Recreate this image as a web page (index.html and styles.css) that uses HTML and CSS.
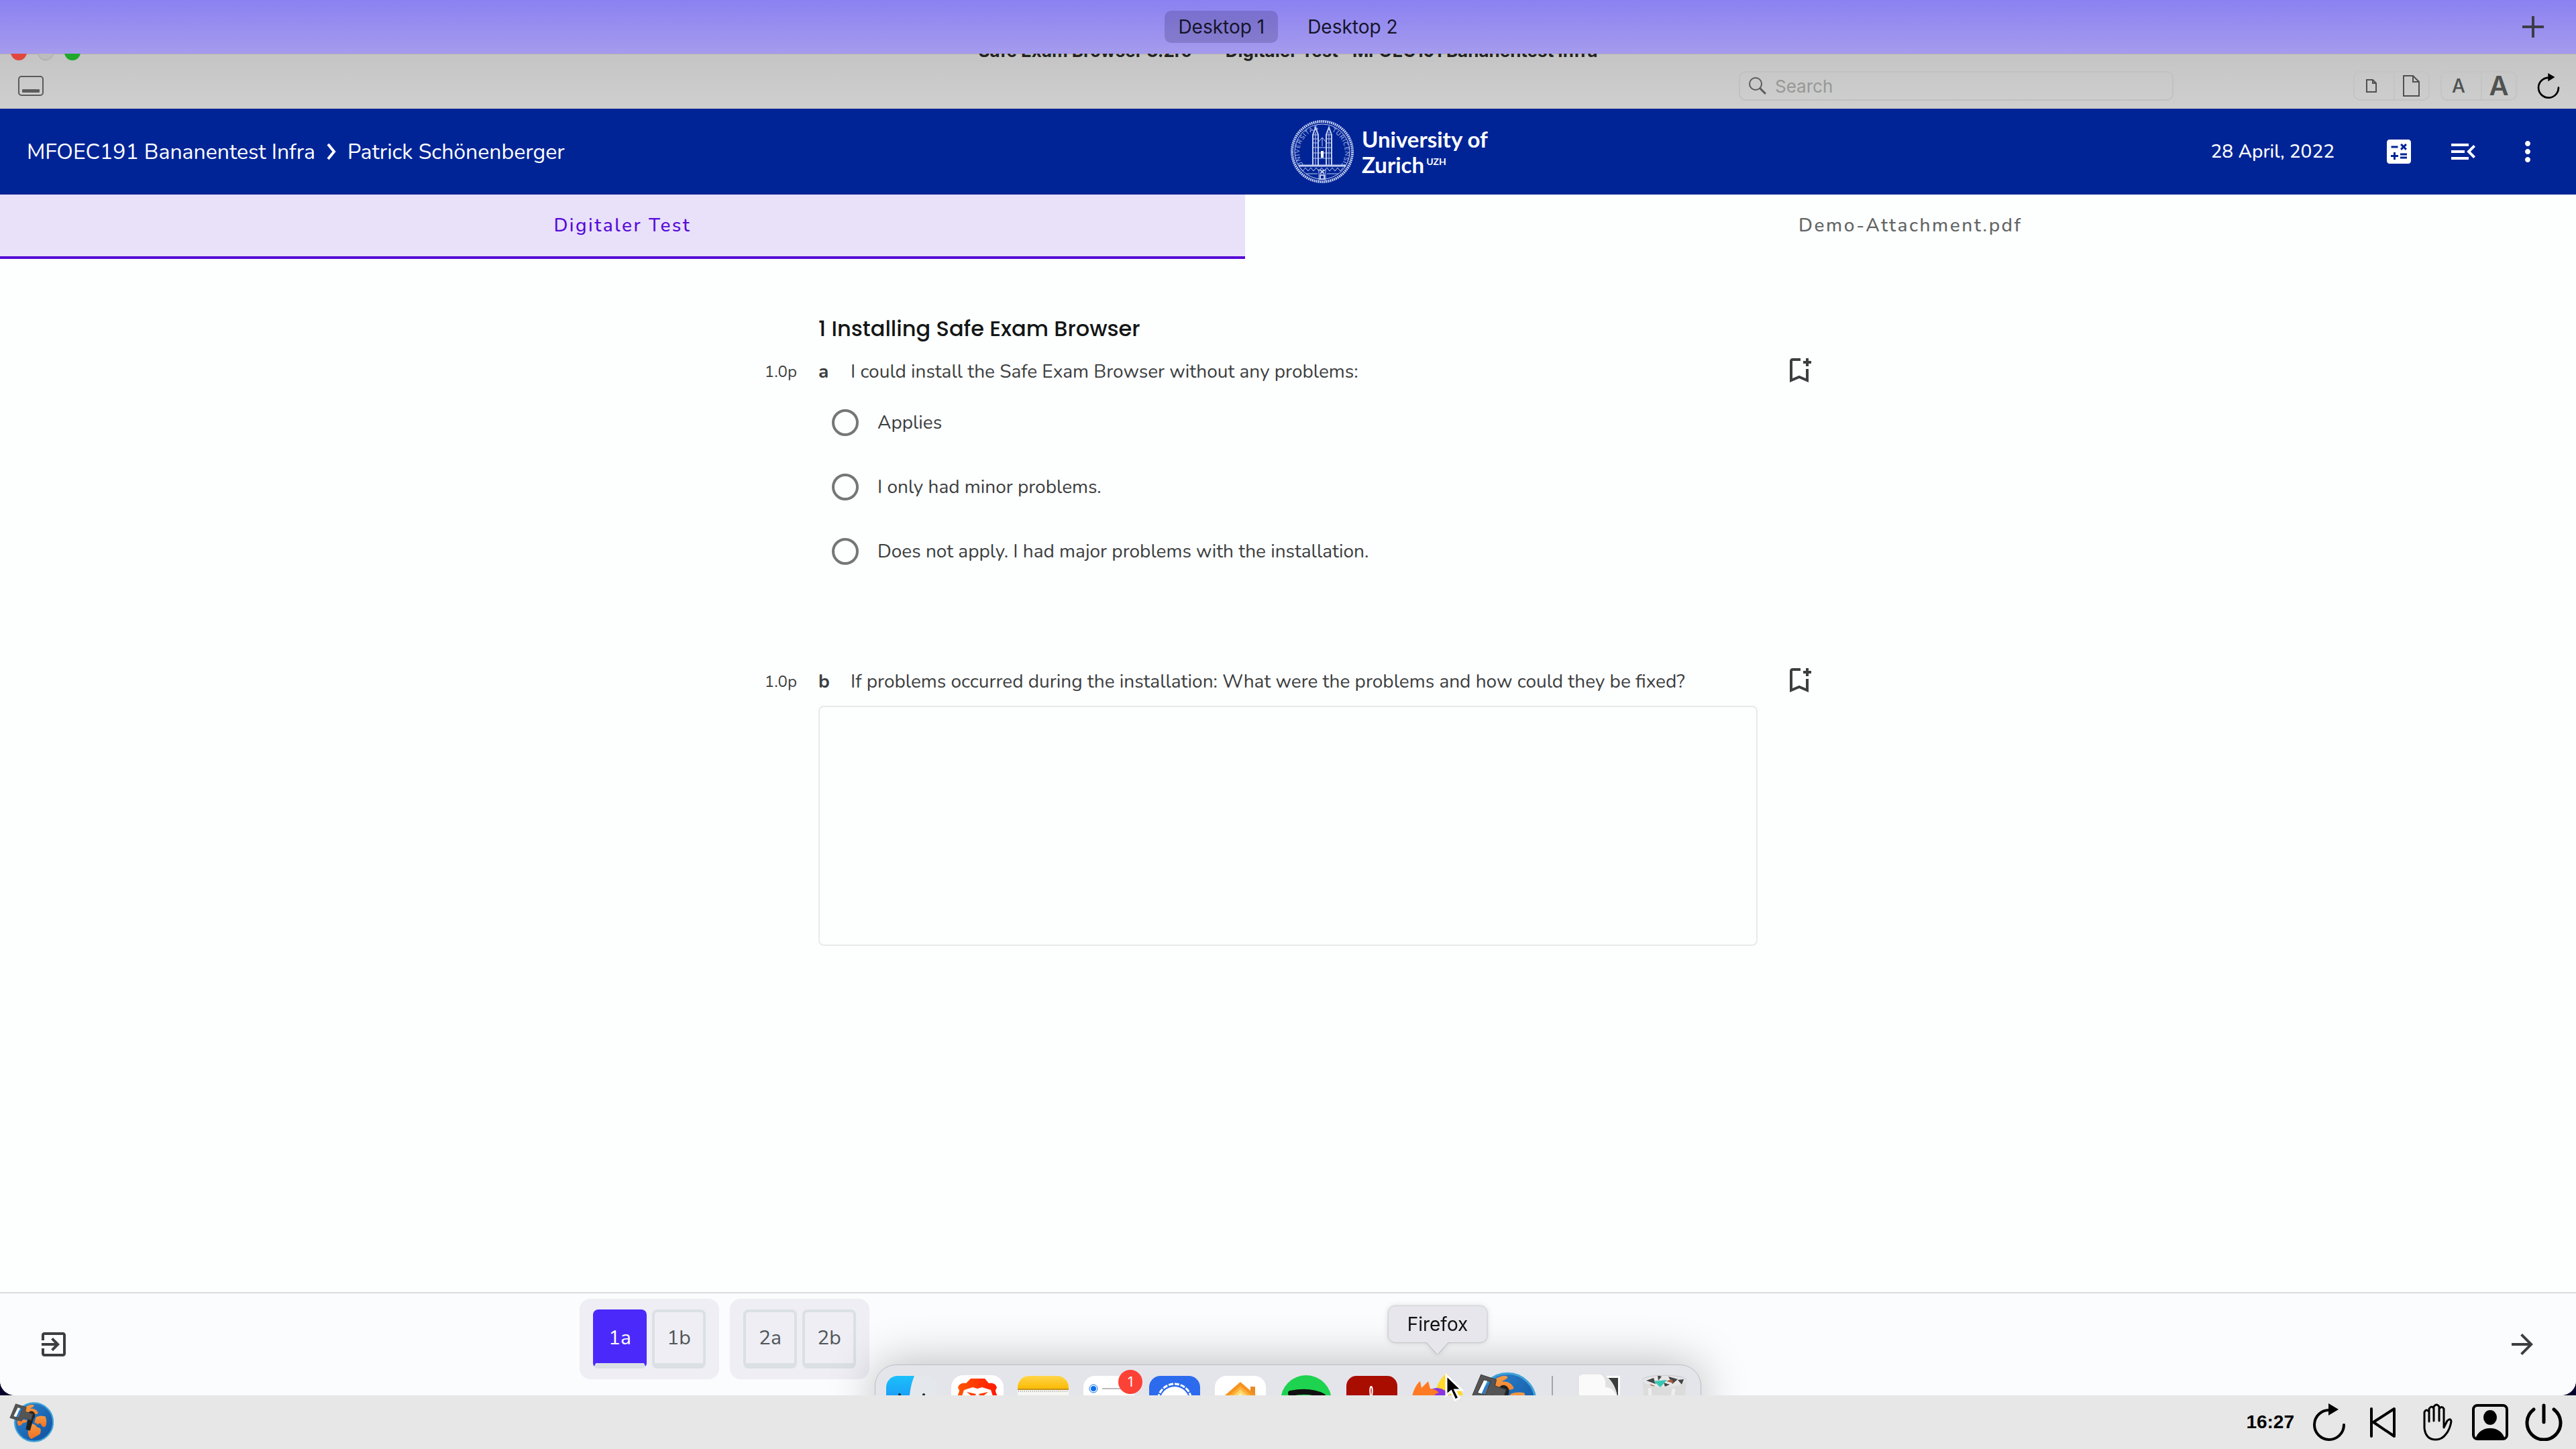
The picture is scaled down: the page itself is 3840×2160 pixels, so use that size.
FILE: index.html
```html
<!DOCTYPE html>
<html lang="en">

<head>
    <meta charset="UTF-8">
    <meta name="viewport" content="width=device-width, initial-scale=1.0">
    <title>Digitaler Test · MFOEC191 Bananentest Infra</title>
    <link rel="stylesheet" href="styles.css">
</head>

<body>
    <!-- Shared icon shapes -->
    <svg class="defs" aria-hidden="true">
        <symbol id="bookmark" viewBox="0 0 24 24">
            <path d="M17 11v6.97l-5-2.14-5 2.14V5h6V3H7c-1.1 0-2 .9-2 2v16l7-3 7 3V11h-2zm4-4h-2v2h-2V7h-2V5h2V3h2v2h2v2z" />
        </symbol>
        <symbol id="reload" viewBox="-2 0 56 56">
            <path d="M27 10A22 22 0 1 0 48 32" fill="none" stroke="#000" stroke-width="4" stroke-linecap="round" />
            <path d="M25 0l15 9-15 9z" />
        </symbol>
        <symbol id="globe" viewBox="0 0 92 84">
            <linearGradient id="sea" x1="0" y1="0" x2="1" y2="1">
                <stop offset="0" stop-color="#2f86cf" />
                <stop offset="1" stop-color="#0d4f9e" />
            </linearGradient>
            <linearGradient id="land" x1="0" y1="0" x2="0" y2="1">
                <stop offset="0" stop-color="#f39a45" />
                <stop offset="1" stop-color="#f37021" />
            </linearGradient>
            <circle cx="51" cy="42" r="40" fill="url(#sea)" stroke="#41a3d9" stroke-width="3" />
            <path fill="url(#land)" d="M34 10c6-4 14-6 17-3 0 4-6 4-8 7 8-1 14 2 17 9-3 4-8 1-12 3-7-1-13 2-18 6-6 3-8 10-14 14 0-12 6-27 18-36z" />
            <path fill="url(#land)" d="M55 32c6-4 15-3 20-2 3 8 3 15 0 21-5 3-8-1-10-6-3-2-5 1-6 3-1-4-5-5-7-4zM17 42c6-6 13-6 20-4-2 6-6 5-10 6-2 5-5 6-9 5z" />
            <path fill="url(#land)" d="M40 46c8-3 15 1 18 7 7 0 9 5 6 13-5 5-12 6-18 11-6-3-8-10-7-18z" />
            <path fill="#222" d="M47 19a8 9 0 0 1 3 16l-7 25-9-3 5-24a8 9 0 0 1 8-14z" />
            <path fill="#555" fill-rule="evenodd" d="M13 4l22 7-2 9 16 5-4 13-16-5-4 7L1 33zM17 11l-9 19 11 3 8-19z" stroke="#3a3a3a" stroke-width="1" stroke-linejoin="round" />
            <path d="M18 12l-9 17 5 2 8-18z" fill="#fff" />
        </symbol>
    </svg>

    <div class="spaces">
        <div class="spaces-list">
            <button class="space active">Desktop 1</button>
            <button class="space">Desktop 2</button>
        </div>
        <button class="space-add" aria-label="Add desktop">
            <svg width="32" height="32" viewBox="0 0 32 32"><path d="M0 14h32v4H0zM14 0h4v32h-4z" fill="#3c3c46" /></svg>
        </button>
    </div>

    <div class="window">
        <div class="titlebar">
            <div class="lights">
                <span class="light red"></span>
                <span class="light grey"></span>
                <span class="light green"></span>
            </div>
            <div class="window-title">Safe Exam Browser 3.2rc &nbsp;—&nbsp; Digitaler Test · MFOEC191 Bananentest Infra</div>
        </div>

        <div class="toolbar">
            <button class="dock-toggle" aria-label="Toggle bottom bar">
                <svg width="38" height="30" viewBox="0 0 38 30">
                    <rect x="1" y="1" width="36" height="28" rx="4" fill="none" stroke="#5a5b5a" stroke-width="2" />
                    <rect x="6" y="20" width="26" height="5" rx="1" fill="#5a5b5a" />
                </svg>
            </button>
            <div class="toolbar-right">
                <label class="search">
                    <svg width="28" height="28" viewBox="0 0 28 28" fill="none" stroke="#5a5b5a">
                        <circle cx="11" cy="11" r="9" stroke-width="2" />
                        <path d="M18 18l7 7" stroke-width="3" stroke-linecap="round" />
                    </svg>
                    <input type="text" placeholder="Search" aria-label="Search">
                </label>
                <div class="tool-group">
                    <button aria-label="Zoom page out">
                        <svg width="16" height="20" viewBox="0 0 16 20"><path d="M1 1h9l5 5v13H1zM10 1v5h5" fill="none" stroke="#4f504f" stroke-width="2" /></svg>
                    </button>
                    <button aria-label="Zoom page in">
                        <svg width="26" height="32" viewBox="0 0 26 32"><path d="M1 1h14l9 9v21H1zM15 1v9h9" fill="none" stroke="#4f504f" stroke-width="2" /></svg>
                    </button>
                </div>
                <div class="tool-group">
                    <button class="text-small">A</button>
                    <button class="text-large">A</button>
                </div>
                <button class="reload" aria-label="Reload">
                    <svg width="38" height="38"><use href="#reload" /></svg>
                </button>
            </div>
        </div>

        <header class="exam-header">
            <div class="breadcrumb">
                <span>MFOEC191 Bananentest Infra</span>
                <svg width="16" height="28" viewBox="0 0 16 28"><path d="M3 3l9 11-9 11" fill="none" stroke="#fff" stroke-width="4" /></svg>
                <span>Patrick Schönenberger</span>
            </div>
            <div class="header-right">
                <div class="logo">
                    <svg class="seal" viewBox="0 0 94 94" fill="none" stroke="#c3cdf0">
                        <circle cx="47" cy="47" r="45" stroke-width="4" stroke-dasharray="2 1" />
                        <circle cx="47" cy="47" r="41" stroke-width="1" />
                        <path id="ring" d="M19 67A34 34 0 1 1 75 67" stroke="none" />
                        <text class="seal-text"><textPath href="#ring">UNIVERSITAS</textPath></text>
                        <text class="seal-text"><textPath href="#ring" startOffset="88">TURICENSIS</textPath></text>
                        <!-- Twin towers of the minster -->
                        <path d="M33 67V22l4-11 4 11v45M53 67V22l4-11 4 11v45" stroke-width="2" />
                        <path d="M37 18v50M57 18v50M33 22h8M33 28h8M33 34h8M33 41h28M33 49h28M33 57h28M53 22h8M53 28h8M53 34h8M41 33l6-7 6 7M47 26v13" />
                        <path d="M45 46h4v10h-4z" fill="#fff" stroke="none" />
                        <path d="M12 68h70" stroke-width="3" />
                        <path d="M14 71l4 5 4-5 4 5 4-5 4 5 4-5 4 5 4-5 4 5 4-5 4 5 4-5 4 5 4-5 4 5 4-5M23 80h17M54 80h17M42 73v18M52 73v18" />
                        <path d="M44 74l6 6M50 74l-6 6M44 82h6v6h-6z" stroke-width="2" />
                    </svg>
                    <div class="logo-text">University of<br>Zurich<sup>UZH</sup></div>
                </div>
                <div class="header-tools">
                    <span class="date">28 April, 2022</span>
                    <button class="icon-btn" aria-label="Calculator">
                        <svg viewBox="0 0 24 24"><path d="M19 3H5c-1.1 0-2 .9-2 2v14c0 1.1.9 2 2 2h14c1.1 0 2-.9 2-2V5c0-1.1-.9-2-2-2zm-5.97 4.06L14.09 6l1.41 1.41L16.91 6l1.06 1.06-1.41 1.41 1.41 1.41-1.06 1.06-1.41-1.4-1.41 1.41-1.06-1.06 1.41-1.41-1.41-1.42zm-6.78.66h5v1.5h-5v-1.5zM11.5 16h-2v2H8v-2H6v-1.5h2v-2h1.5v2h2V16zm6.5 1.25h-5v-1.5h5v1.5zm0-2.5h-5v-1.5h5v1.5z" /></svg>
                    </button>
                    <button class="icon-btn" aria-label="Open menu">
                        <svg viewBox="0 0 24 24"><path d="M3 18h13v-2H3v2zm0-5h10v-2H3v2zm0-7v2h13V6H3zm18 9.59L17.42 12 21 8.41 19.59 7l-5 5 5 5L21 15.59z" /></svg>
                    </button>
                    <button class="icon-btn" aria-label="More">
                        <svg viewBox="0 0 24 24"><path d="M12 8c1.1 0 2-.9 2-2s-.9-2-2-2-2 .9-2 2 .9 2 2 2zm0 2c-1.1 0-2 .9-2 2s.9 2 2 2 2-.9 2-2-.9-2-2-2zm0 6c-1.1 0-2 .9-2 2s.9 2 2 2 2-.9 2-2-.9-2-2-2z" /></svg>
                    </button>
                </div>
            </div>
        </header>

        <div class="tabs">
            <button class="tab active">Digitaler Test</button>
            <button class="tab">Demo-Attachment.pdf</button>
        </div>

        <main class="exam">
            <h1>1 Installing Safe Exam Browser</h1>

            <section class="question">
                <span class="points">1.0p</span>
                <div class="question-title"><b>a</b><span>I could install the Safe Exam Browser without any problems:</span></div>
                <button class="icon-btn bookmark" aria-label="Bookmark question a"><svg><use href="#bookmark" /></svg></button>
                <div class="answers">
                    <label><input type="radio" name="q1a">Applies</label>
                    <label><input type="radio" name="q1a">I only had minor problems.</label>
                    <label><input type="radio" name="q1a">Does not apply. I had major problems with the installation.</label>
                </div>
            </section>

            <section class="question">
                <span class="points">1.0p</span>
                <label class="question-title" for="q1b"><b>b</b><span>If problems occurred during the installation: What were the problems and how could they be fixed?</span></label>
                <button class="icon-btn bookmark" aria-label="Bookmark question b"><svg><use href="#bookmark" /></svg></button>
                <textarea id="q1b"></textarea>
            </section>
        </main>

        <footer class="exam-footer">
            <button class="icon-btn" aria-label="Exit exam">
                <svg viewBox="0 0 24 24"><path d="M10.09 15.59L11.5 17l5-5-5-5-1.41 1.41L12.67 11H3v2h9.67l-2.58 2.59zM19 3H5c-1.11 0-2 .9-2 2v4h2V5h14v14H5v-4H3v4c0 1.1.89 2 2 2h14c1.1 0 2-.9 2-2V5c0-1.1-.9-2-2-2z" /></svg>
            </button>
            <nav class="question-nav">
                <div class="nav-group">
                    <button class="current">1a</button>
                    <button>1b</button>
                </div>
                <div class="nav-group">
                    <button>2a</button>
                    <button>2b</button>
                </div>
            </nav>
            <button class="icon-btn" aria-label="Next question">
                <svg viewBox="0 0 24 24"><path d="M12 4l-1.41 1.41L16.17 11H4v2h12.17l-5.58 5.59L12 20l8-8z" /></svg>
            </button>
        </footer>
    </div>

    <!-- macOS dock, half hidden behind the taskbar -->
    <div class="dock">
        <svg class="app" viewBox="0 0 76 76">
            <linearGradient id="finder" x1="0" y1="0" x2="0" y2="1">
                <stop offset="0" stop-color="#1cc0fb" />
                <stop offset="1" stop-color="#1a6ff0" />
            </linearGradient>
            <rect width="76" height="76" rx="17" fill="#e4e8ec" />
            <path d="M17 0h25c-5 12-7 24-8 42h10v34H17A17 17 0 0 1 0 59V17A17 17 0 0 1 17 0z" fill="url(#finder)" />
            <path d="M20 28v10M56 28v10" stroke="#1d2a36" stroke-width="4" stroke-linecap="round" />
        </svg>
        <svg class="app" viewBox="0 0 76 76">
            <linearGradient id="lion"><stop offset="0" stop-color="#ff5500" /><stop offset="1" stop-color="#ff1a00" /></linearGradient>
            <rect x="-1" y="-1" width="78" height="78" rx="18" fill="#fff" />
            <path d="M28 4h21l6 7c6-1 11 1 12 7-3 3-2 6 0 10l-4 34H13L9 28c2-4 3-7 0-10 1-6 6-8 12-7z" fill="url(#lion)" />
            <path d="M15 30l3-9 13-4 7 2 7-2 13 4 3 9-5 24H20z" fill="#fff" />
            <path d="M22 24l14 3-3 6zM54 24l-14 3 3 6z" fill="#ff3a00" />
        </svg>
        <svg class="app" viewBox="0 0 76 76">
            <linearGradient id="notes" x1="0" y1="0" x2="0" y2="1">
                <stop offset="0" stop-color="#ffd54a" />
                <stop offset="1" stop-color="#fab900" />
            </linearGradient>
            <rect width="76" height="76" rx="17" fill="#f6f6f2" />
            <path d="M0 20v-3A17 17 0 0 1 17 0h42a17 17 0 0 1 17 17v3z" fill="url(#notes)" />
            <path d="M0 20h76" stroke="#c28f1c" stroke-width="2" />
            <path d="M1 23h74" stroke="#aaa" stroke-width="2" stroke-dasharray="1 2" />
        </svg>
        <div class="app-wrap">
            <svg class="app" viewBox="0 0 76 76">
                <rect width="76" height="76" rx="17" fill="#fff" />
                <circle cx="15" cy="19" r="6" fill="none" stroke="#1670e8" stroke-width="1" />
                <circle cx="15" cy="19" r="4" fill="#0a6ff0" />
                <path d="M28 19h40" stroke="#bbb" stroke-width="2" />
            </svg>
            <span class="badge">1</span>
        </div>
        <svg class="app" viewBox="0 0 76 76">
            <rect width="76" height="76" rx="17" fill="#2c6bed" />
            <circle cx="38" cy="37" r="25" fill="none" stroke="#fff" stroke-width="3" stroke-dasharray="7 2" />
            <circle cx="38" cy="38" r="22" fill="#fff" />
        </svg>
        <svg class="app" viewBox="0 0 76 76">
            <rect width="76" height="76" rx="17" fill="#fff" />
            <path d="M53 16h7v24h-7z" fill="#e98a25" />
            <path d="M38 9l30 26H8z" fill="#f7931e" />
            <path d="M38 15l23 20H15z" fill="#fbb03b" />
            <path d="M38 20l18 16H20z" fill="#fdd468" />
            <path d="M38 25l12 12H26z" fill="#fff0b0" />
        </svg>
        <svg class="app" viewBox="0 0 76 76">
            <circle cx="38" cy="37" r="38" fill="#1ed34f" />
            <path d="M15 26c18-4 34-3 48 4" fill="none" stroke="#111" stroke-width="8" stroke-linecap="round" />
        </svg>
        <svg class="app" viewBox="0 0 76 76">
            <rect width="76" height="76" rx="15" fill="#a90d00" />
            <path d="M37 34c-6-24 6-24 0 0" fill="none" stroke="#fff" stroke-width="2" />
        </svg>
        <div class="app-wrap">
            <svg class="app" viewBox="0 0 76 76">
                <path d="M51-4c4 5 6 10 12 13 7 5 11 13 13 21v16H36V20C38 10 45 2 51-4z" fill="#ffd92b" />
                <circle cx="37" cy="38" r="20" fill="#8a35e0" />
                <path d="M-1 42C-1 26 6 12 12 8l2 10L24 8l3 11c6 0 10 3 13 6-6 2-8 4-12 12z" fill="#ff7a22" />
            </svg>
            <span class="tooltip">Firefox</span>
        </div>
        <svg class="app seb"><use href="#globe" x="-9" y="-6" width="96" height="88" /></svg>
        <span class="dock-separator"></span>
        <svg class="app file" viewBox="0 0 72 76">
            <path d="M38 0h24v70H38z" fill="#fff" />
            <path d="M40 3h19v62H40z" fill="#3a3d3d" />
            <path d="M0 0L6-3h26c14 2 24 20 26 36v42H0z" fill="#fafafa" stroke="#ddd" />
            <path d="M32-3c8 4 9 12 8 20 9 0 15 6 18 16C56 14 46 0 32-3z" fill="#e1e1e1" />
        </svg>
        <svg class="app trash" viewBox="0 0 68 76">
            <path d="M8 4l9-5 7 4 5-8 9 7 9-6 8 8 8 3-2 10H6z" fill="#e6e6e6" />
            <path d="M7 7l11-4 3 9zM40 1l6 11 8-7zM24-1l6 2-5 6zM54 6l9-1-3 8zM33 10l9 3-7 3z" fill="#454545" />
            <path d="M18 8l20-2-10 11z" fill="#38c7b3" />
            <path d="M37 8l8-3 3 6zM12 12l8 3-3 2z" fill="#a85840" />
            <path d="M1 6c6 14 60 15 66 0l-6 66H7z" fill="#dcdcdc" />
            <path d="M1 6C4-3 64-3 67 6" fill="none" stroke="#c6c6c8" />
            <path d="M12 18l4 53M48 19l-8 52" stroke="#eee" stroke-width="5" />
        </svg>
    </div>

    <div class="taskbar">
        <button class="task-app" aria-label="Safe Exam Browser"><svg width="66" height="60"><use href="#globe" /></svg></button>
        <div class="task-tools">
            <span class="clock">16:27</span>
            <button aria-label="Reload"><svg><use href="#reload" /></svg></button>
            <button aria-label="Back to start">
                <svg viewBox="0 0 56 56" fill="none" stroke="#000" stroke-width="4" stroke-linecap="round"><path d="M11 8v41M45 8v41L14 28z" stroke-linejoin="round" /></svg>
            </button>
            <button aria-label="Raise hand">
                <svg viewBox="-3 0 56 56" fill="none" stroke="#000" stroke-width="3" stroke-linejoin="round" stroke-linecap="round">
                    <path d="M7 37V13q3-6 7 0V8q4-6 7 0V5q4-6 8 0v3q4-5 7 0v28l5-10q5-5 6 1-2 12-8 19-6 8-15 8Q9 54 7 37zM14 13v14M21 8v18M29 7v19" />
                </svg>
            </button>
            <button aria-label="User">
                <svg viewBox="0 0 56 56"><rect x="3" y="3" width="50" height="50" rx="6" fill="none" stroke="#000" stroke-width="4" /><ellipse cx="28" cy="21" rx="10" ry="11" /><path d="M6 53c3-10 11-16 22-16s19 6 22 16z" /></svg>
            </button>
            <button aria-label="Quit">
                <svg viewBox="0 0 56 56" fill="none" stroke="#000" stroke-width="5" stroke-linecap="round"><path d="M28 3v25M13 9a25 25 0 1 0 30 0" /></svg>
            </button>
        </div>
    </div>

    <svg class="cursor" width="30" height="44" viewBox="0 0 30 44"><path d="M3 3v30l7-6 6 13 6-3-6-12h10z" fill="#000" stroke="#fff" stroke-width="3" /></svg>
</body>

</html>
```
FILE: styles.css
```css
* {
    box-sizing: border-box;
    margin: 0;
    padding: 0;
}

body {
    background: #05002c;
    color: #3c3f3f;
    font-family: Nunito, Lato, sans-serif;
    font-size: 28px;
    min-height: 100vh;
    display: flex;
    flex-direction: column;
    position: relative;
    overflow-x: hidden;
}

button {
    background: none;
    border: none;
    font: inherit;
    color: inherit;
    cursor: pointer;
}

svg {
    display: block;
}

.defs {
    position: absolute;
    width: 0;
    height: 0;
}

/* Mission Control bar */
.spaces {
    display: grid;
    grid-template-columns: 1fr auto 1fr;
    align-items: center;
    height: 80px;
    padding: 0 48px;
    background: linear-gradient(#8b81f1, #a59bed);
    font-family: Inter, sans-serif;
    color: #15152a;
}

.spaces-list {
    grid-column: 2;
    display: flex;
    gap: 24px;
}

.space {
    height: 48px;
    padding: 0 20px;
    border-radius: 10px;
    font-size: 28px;
}

.space.active {
    background: rgba(40, 30, 90, 0.22);
}

.space-add {
    justify-self: end;
}

.window {
    flex: 1;
    display: flex;
    flex-direction: column;
    background: #fdfefe;
    border-radius: 0 0 22px 22px;
    overflow: hidden;
}

/* Only the lower edge of the title shows under the spaces bar */
.titlebar {
    display: grid;
    grid-template-columns: 1fr auto 1fr;
    grid-template-rows: 12px;
    align-items: end;
    height: 12px;
    padding: 0 16px;
    overflow: hidden;
    background: #c4c5c4;
    box-shadow: inset 0 1px #aeaeb4;
    font-family: Inter, sans-serif;
}

.lights {
    display: flex;
    gap: 16px;
    padding-bottom: 2px;
}

.light {
    width: 24px;
    height: 24px;
    border-radius: 50%;
}

.light.red {
    background: #e0483e;
}

.light.grey {
    background: #bbbcbb;
    border: 1px solid #a3a4a3;
}

.light.green {
    background: #1fa82b;
}

.window-title {
    font-size: 26px;
    font-weight: 700;
    line-height: 32px;
    color: #222;
    white-space: nowrap;
}

.toolbar {
    display: flex;
    justify-content: space-between;
    align-items: center;
    height: 70px;
    padding: 2px 22px 0 27px;
    background: linear-gradient(#c5c6c5, #cecfce);
    font-family: Inter, sans-serif;
}

.toolbar-right {
    display: flex;
    align-items: center;
    gap: 16px;
}

.search {
    display: flex;
    align-items: center;
    gap: 12px;
    width: 648px;
    height: 44px;
    padding: 0 12px;
    margin-right: 252px;
    border: 2px solid #c0c1c0;
    border-radius: 10px;
}

.search input {
    flex: 1;
    border: none;
    outline: none;
    background: none;
    font: inherit;
    font-size: 26px;
}

.search input::placeholder {
    color: #979897;
}

.tool-group {
    display: flex;
    width: 114px;
    height: 44px;
    border: 2px solid #c3c4c3;
    border-radius: 10px;
}

.tool-group button {
    flex: 1;
    display: flex;
    align-items: center;
    justify-content: center;
    line-height: 40px;
    color: #505150;
}

.tool-group button:first-child {
    padding-right: 8px;
    border-right: 2px solid #c3c4c3;
}

.tool-group .text-small {
    font-size: 28px;
    font-weight: 500;
}

.tool-group .text-large {
    font-size: 40px;
    font-weight: 600;
}

.reload {
    margin-left: 12px;
}

/* Exam header */
.exam-header {
    display: grid;
    grid-template-columns: 1fr 1fr;
    align-items: center;
    height: 128px;
    padding: 0 48px 0 40px;
    background: #002496;
    color: #fff;
}

.breadcrumb {
    display: flex;
    align-items: center;
    gap: 16px;
    font-size: 32px;
}

.header-right {
    display: flex;
    align-items: center;
    justify-content: space-between;
    padding-left: 8px;
}

.logo {
    display: flex;
    align-items: center;
    gap: 12px;
}

.seal {
    width: 94px;
    height: 94px;
}

.seal-text {
    font-size: 9px;
    letter-spacing: 1px;
    fill: #c3cdf0;
    stroke: none;
}

.logo-text {
    font-family: Lato, sans-serif;
    font-size: 33px;
    font-weight: 700;
    line-height: 38px;
}

.logo-text sup {
    margin-left: 3px;
    font-size: 14px;
    line-height: 0;
}

.header-tools {
    display: flex;
    align-items: center;
    justify-content: flex-end;
    gap: 48px;
}

.date {
    margin-right: 24px;
    font-size: 28px;
    font-weight: 500;
}

.icon-btn,
.icon-btn svg {
    width: 48px;
    height: 48px;
    fill: currentColor;
}

/* Tabs */
.tabs {
    display: flex;
}

.tab {
    flex: 1 1 auto;
    height: 96px;
    border-bottom: 4px solid transparent;
    font-size: 28px;
    font-weight: 500;
    letter-spacing: 0.09em;
    color: #626565;
}

.tab.active {
    background: #e9e0f9;
    border-bottom-color: #560bd8;
    color: #560bd8;
}

/* Questions */
.exam {
    flex: 1;
    width: 100%;
    max-width: 1572px;
    margin: 0 auto;
    padding: 80px 0;
}

.exam h1 {
    padding: 0 86px;
    margin-bottom: 14px;
    font-family: Poppins, Inter, sans-serif;
    font-size: 32px;
    font-weight: 500;
    line-height: 48px;
    color: #141616;
}

.question {
    display: grid;
    grid-template-columns: 86px 1fr 86px;
    align-items: center;
    row-gap: 14px;
    margin-bottom: 128px;
}

.points {
    padding: 4px 32px 0 0;
    text-align: right;
    font-size: 24px;
    line-height: 44px;
}

.question-title {
    display: flex;
    padding-top: 4px;
    line-height: 44px;
}

.question-title b {
    width: 48px;
}

.bookmark {
    justify-self: end;
}

.answers {
    grid-column: 2;
    display: flex;
    flex-direction: column;
    gap: 16px;
    padding-left: 20px;
}

.answers label {
    display: flex;
    align-items: center;
    gap: 28px;
    height: 80px;
}

.answers input {
    appearance: none;
    width: 40px;
    height: 40px;
    border: 4px solid #757777;
    border-radius: 50%;
}

.answers input:checked {
    background: #4c29fb;
}

textarea {
    grid-column: 2;
    width: 100%;
    height: 358px;
    padding: 16px;
    border: 2px solid #e8eaea;
    border-radius: 8px;
    background: none;
    font: inherit;
    resize: none;
}

/* Footer navigation */
.exam-footer {
    display: flex;
    align-items: center;
    height: 154px;
    padding: 0 56px;
    border-top: 2px solid #d9dddf;
    background: #fbfcfd;
}

.question-nav {
    flex: 1;
    display: flex;
    align-self: flex-start;
    gap: 16px;
    margin-left: calc(20vw - 8px);
    padding-top: 8px;
}

.nav-group {
    display: flex;
    gap: 8px;
    padding: 16px 20px;
    border-radius: 16px;
    background: #eeeef4;
}

.nav-group button {
    width: 80px;
    height: 88px;
    border: 4px solid #dae0e4;
    border-bottom-width: 8px;
    border-radius: 8px;
    font-size: 30px;
    color: #50565a;
}

.nav-group .current {
    background: #4c29fb;
    border-color: #4c29fb;
    border-bottom-color: #dae0e4;
    color: #fff;
}

/* Dock */
.dock {
    position: absolute;
    left: 50%;
    bottom: 40px;
    transform: translateX(-50%);
    display: flex;
    gap: 22px;
    height: 86px;
    padding: 16px 20px 0 16px;
    border: 1px solid #bdbdc2;
    border-radius: 32px;
    background: #e4e5eb;
    box-shadow: 0 0 70px rgba(0, 0, 0, 0.28);
}

.app {
    width: 76px;
    height: 76px;
    overflow: visible;
}

.app-wrap {
    position: relative;
}

.badge {
    position: absolute;
    top: -9px;
    right: -12px;
    width: 36px;
    height: 36px;
    border-radius: 50%;
    background: #fc4137;
    color: #fff;
    font-family: Inter, sans-serif;
    font-size: 20px;
    line-height: 36px;
    text-align: center;
}

.tooltip {
    position: absolute;
    bottom: 118px;
    left: 50%;
    transform: translateX(-50%);
    padding: 0 28px;
    border-radius: 10px;
    background: #e6e6ec;
    filter: drop-shadow(0 0 1px rgba(0, 0, 0, 0.3)) drop-shadow(0 0 4px rgba(0, 0, 0, 0.15));
    color: #111;
    font-family: Inter, sans-serif;
    font-size: 28px;
    line-height: 54px;
}

.tooltip::after {
    content: '';
    position: absolute;
    top: 100%;
    left: 50%;
    transform: translateX(-50%);
    border: 16px solid transparent;
    border-top: 18px solid #e6e6ec;
    border-bottom: none;
}

.dock-separator {
    width: 2px;
    margin: 0 16px 0 12px;
    background: #a3a4a9;
}

.app.file {
    width: 72px;
}

.app.trash {
    width: 68px;
}

/* Taskbar */
.taskbar {
    position: relative;
    z-index: 2;
    display: flex;
    justify-content: space-between;
    align-items: center;
    height: 80px;
    padding: 0 20px 0 14px;
    background: #e6e7e6;
    color: #000;
}

.task-tools {
    display: flex;
    align-items: center;
    gap: 24px;
}

.task-tools svg {
    width: 56px;
    height: 56px;
}

.clock {
    font-family: "Liberation Sans", Arial, sans-serif;
    font-size: 28px;
    font-weight: 700;
}

.cursor {
    position: absolute;
    z-index: 3;
    left: calc(50% + 233px);
    bottom: 69px;
}
```
